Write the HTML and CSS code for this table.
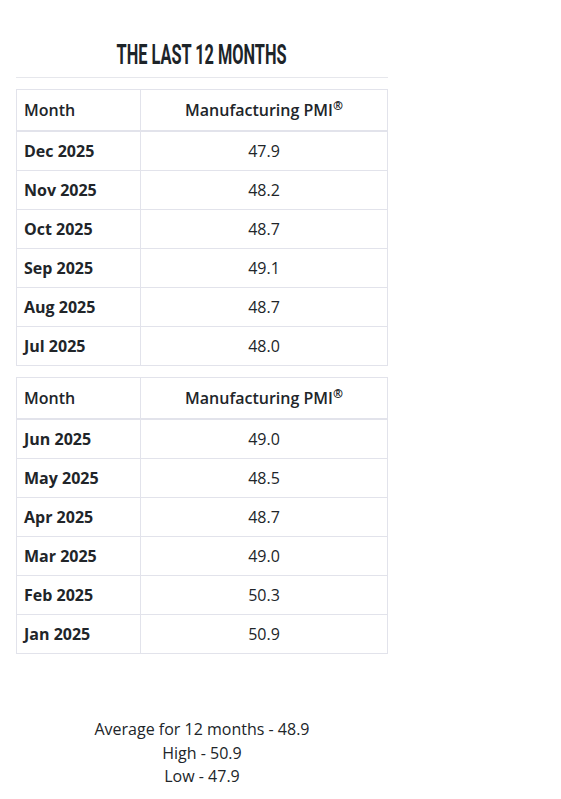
FILE: index.html
```html
<!DOCTYPE html>
<html lang="en">
<head>
<meta charset="UTF-8" />
<meta name="viewport" content="width=device-width, initial-scale=1" />
<title>The Last 12 Months - Manufacturing PMI</title>
<link rel="stylesheet" href="styles.css">
</head>
<body>

<div class="wrap">
  <h2 class="title"><span>THE LAST 12 MONTHS</span></h2>

  <table class="pmi">
    <thead>
      <tr><th>Month</th><th class="num">Manufacturing PMI<sup>®</sup></th></tr>
    </thead>
    <tbody>
      <tr><th>Dec 2025</th><td>47.9</td></tr>
      <tr><th>Nov 2025</th><td>48.2</td></tr>
      <tr><th>Oct 2025</th><td>48.7</td></tr>
      <tr><th>Sep 2025</th><td>49.1</td></tr>
      <tr><th>Aug 2025</th><td>48.7</td></tr>
      <tr><th>Jul 2025</th><td>48.0</td></tr>
    </tbody>
  </table>

  <table class="pmi">
    <thead>
      <tr><th>Month</th><th class="num">Manufacturing PMI<sup>®</sup></th></tr>
    </thead>
    <tbody>
      <tr><th>Jun 2025</th><td>49.0</td></tr>
      <tr><th>May 2025</th><td>48.5</td></tr>
      <tr><th>Apr 2025</th><td>48.7</td></tr>
      <tr><th>Mar 2025</th><td>49.0</td></tr>
      <tr><th>Feb 2025</th><td>50.3</td></tr>
      <tr><th>Jan 2025</th><td>50.9</td></tr>
    </tbody>
  </table>

  <div class="summary">
    <p>Average for 12 months - 48.9</p>
    <p>High - 50.9</p>
    <p>Low - 47.9</p>
  </div>
</div>

</body>
</html>
```

FILE: styles.css
```css
body {
  margin: 0;
  background: #fff;
  color: #212529;
  font-family: 'Open Sans', 'Noto Sans', sans-serif;
  font-size: 16px;
}
.wrap {
  width: 372px;
  margin-left: 16px;
  padding-top: 40px;
}
.title {
  margin: 0 0 11px;
  padding-bottom: 7px;
  border-bottom: 1px solid #e6e7ec;
  text-align: center;
  font-family: Roboto, 'Liberation Sans', sans-serif;
  font-size: 27px;
  font-weight: 700;
  line-height: 30px;
  color: #1d2429;
}
.title span {
  display: inline-block;
  transform: scaleX(0.605);
}
.pmi {
  width: 100%;
  border-collapse: collapse;
  margin-bottom: 11px;
}
.pmi th,
.pmi td {
  border: 1px solid #e2e3eb;
  padding: 7px 7px;
  line-height: 24px;
  text-align: left;
}
.pmi thead th {
  padding: 8px 7px;
  border-bottom-width: 2px;
  font-weight: 600;
}
.pmi tbody th {
  width: 109px;
  font-weight: 700;
}
.pmi .num,
.pmi td {
  text-align: center;
}
.pmi td {
  font-weight: 400;
}
.pmi sup {
  font-size: 12px;
  line-height: 0;
  font-weight: 700;
}
.summary {
  margin-top: 64px;
  text-align: center;
}
.summary p {
  margin: 0;
  line-height: 23.5px;
}
```
